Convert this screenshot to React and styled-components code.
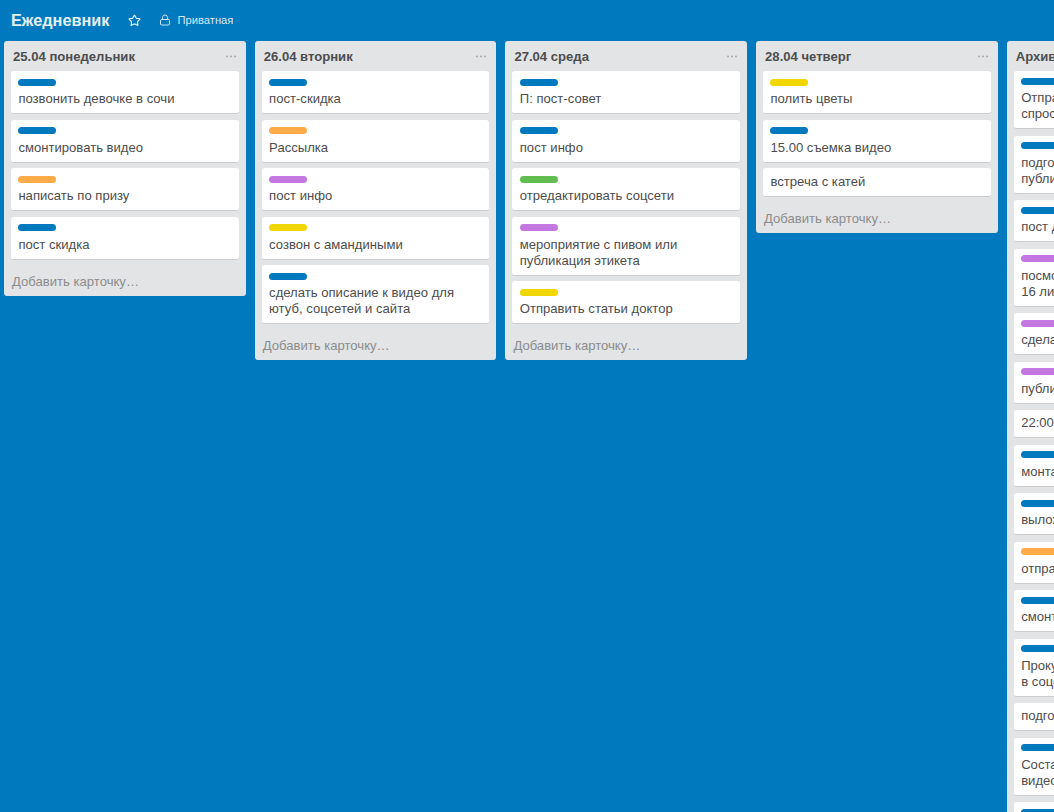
import React from "react";
import styled, { createGlobalStyle } from "styled-components";
import { Star, Lock } from "lucide-react";

const Global = createGlobalStyle`
  html, body {
    margin: 0;
    height: 100%;
    overflow: hidden;
    background: #0079bf;
    font-family: "Liberation Sans", Arial, sans-serif;
  }
`;

const Page = styled.div`
  width: 1054px;
  height: 812px;
  overflow: hidden;
  background: #0079bf;
`;

const TopBar = styled.div`
  display: flex;
  align-items: center;
  height: 41px;
  padding-left: 11px;
  color: #fff;
`;

const BoardTitle = styled.h1`
  margin: 0;
  font-size: 16.3px;
  font-weight: bold;
  color: #e4f0f6;
`;

const StarBtn = styled.span`
  display: flex;
  margin-left: 19px;
  color: #fff;
`;

const Privacy = styled.span`
  display: flex;
  align-items: center;
  gap: 6px;
  margin: 0 0 1px 18px;
  font-size: 11.2px;
  color: #d6e8f3;
`;

const Board = styled.div`
  display: flex;
  align-items: flex-start;
  gap: 9px;
  padding-left: 4px;
`;

const List = styled.section`
  flex: 0 0 241.7px;
  box-sizing: border-box;
  padding: 0 7px;
  background: #e2e4e6;
  border-radius: 3px;
`;

const ListHead = styled.header`
  display: flex;
  align-items: center;
  justify-content: space-between;
  height: 30px;
  padding: 0 3px 0 2px;
`;

const ListTitle = styled.h2`
  margin: 0;
  font-size: 13.1px;
  font-weight: bold;
  color: #4d4d4d;
  white-space: nowrap;
`;

const Card = styled.article`
  box-sizing: border-box;
  padding: 6px 7px 6px 7.4px;
  background: #fff;
  border-bottom: 1px solid #ccc;
  border-radius: 3px;
`;

const Cards = styled.div`
  display: flex;
  flex-direction: column;
  gap: ${(p) => (p.$tight ? "6.5px" : "5.5px")};

  ${Card} {
    padding-top: ${(p) => (p.$tight ? "5px" : "6px")};
  }
`;

const Label = styled.div`
  width: 38px;
  height: 7px;
  margin: 1.5px 0 5.5px;
  border-radius: 4px;
  background: ${(p) => p.$color};
`;

const CardText = styled.div`
  font-size: 13.1px;
  line-height: 16px;
  color: #4d4d4d;
  white-space: pre-line;
`;

const AddCard = styled.div`
  height: 36px;
  padding: 14px 1px 0;
  box-sizing: border-box;
  font-size: 13.1px;
  line-height: 16px;
  color: #8c8c8c;
`;

const c = {
  blue: "#0079bf",
  orange: "#ffab4a",
  purple: "#c377e0",
  yellow: "#f2d600",
  green: "#61bd4f",
};

const lists = [
  {
    title: "25.04 понедельник",
    cards: [
      [c.blue, "позвонить девочке в сочи"],
      [c.blue, "смонтировать видео"],
      [c.orange, "написать по призу"],
      [c.blue, "пост скидка"],
    ],
  },
  {
    title: "26.04 вторник",
    cards: [
      [c.blue, "пост-скидка"],
      [c.orange, "Рассылка"],
      [c.purple, "пост инфо"],
      [c.yellow, "созвон с амандиными"],
      [c.blue, "сделать описание к видео для\nютуб, соцсетей и сайта"],
    ],
  },
  {
    title: "27.04 среда",
    cards: [
      [c.blue, "П: пост-совет"],
      [c.blue, "пост инфо"],
      [c.green, "отредактировать соцсети"],
      [c.purple, "мероприятие с пивом или\nпубликация этикета"],
      [c.yellow, "Отправить статьи доктор"],
    ],
  },
  {
    title: "28.04 четверг",
    cards: [
      [c.yellow, "полить цветы"],
      [c.blue, "15.00 съемка видео"],
      [null, "встреча с катей"],
    ],
  },
  {
    title: "Архив",
    tight: true,
    cards: [
      [c.blue, "Отправить\nспросить"],
      [c.blue, "подготовить\nпубликацию"],
      [c.blue, "пост для"],
      [c.purple, "посмотреть\n16 лиц"],
      [c.purple, "сделать"],
      [c.purple, "публикация"],
      [null, "22:00"],
      [c.blue, "монтаж"],
      [c.blue, "выложить"],
      [c.orange, "отправить"],
      [c.blue, "смонтировать"],
      [c.blue, "Прокупить\nв соцсети"],
      [null, "подготовить"],
      [c.blue, "Составить\nвидео"],
      [c.blue, "пост"],
    ],
  },
];

const Dots = () => (
  <svg width="10" height="3" viewBox="0 0 10 3" fill="#aaa">
    <circle cx="1" cy="1.5" r="1" />
    <circle cx="5" cy="1.5" r="1" />
    <circle cx="9" cy="1.5" r="1" />
  </svg>
);

export default function App() {
  return (
    <Page>
      <Global />
      <TopBar>
        <BoardTitle>Ежедневник</BoardTitle>
        <StarBtn>
          <Star size={13} strokeWidth={1.9} />
        </StarBtn>
        <Privacy>
          <Lock size={12} strokeWidth={1.9} />
          Приватная
        </Privacy>
      </TopBar>
      <Board>
        {lists.map((list) => (
          <List key={list.title}>
            <ListHead>
              <ListTitle>{list.title}</ListTitle>
              <Dots />
            </ListHead>
            <Cards $tight={list.tight}>
              {list.cards.map(([color, text], i) => (
                <Card key={i}>
                  {color && <Label $color={color} />}
                  <CardText>{text}</CardText>
                </Card>
              ))}
            </Cards>
            <AddCard>Добавить карточку…</AddCard>
          </List>
        ))}
      </Board>
    </Page>
  );
}
